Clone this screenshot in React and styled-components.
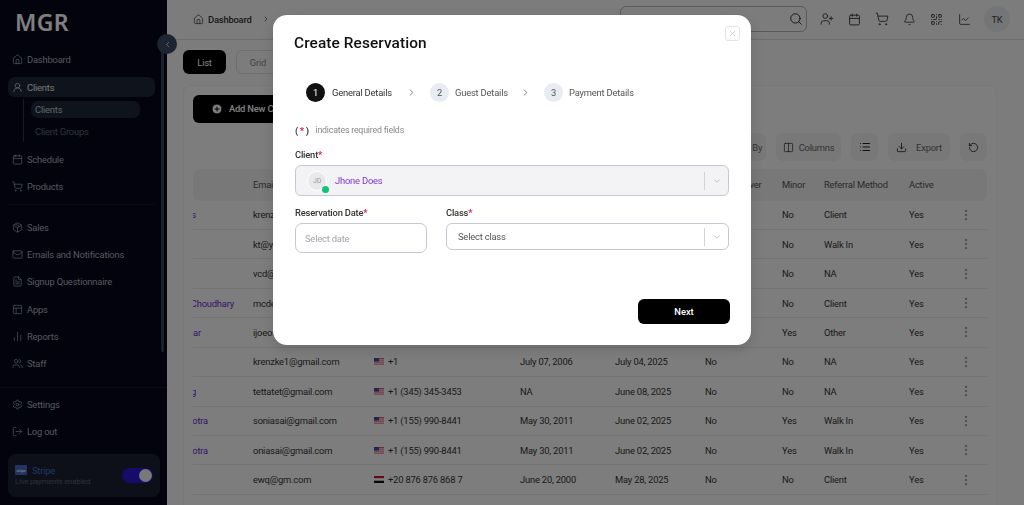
import React from "react";
import styled, { createGlobalStyle } from "styled-components";
import {
  Home, UserRound, Calendar, ShoppingCart, Package, Mail, FileText, PanelsTopLeft,
  ChartNoAxesColumn, Users, Settings, LogOut, Search, UserPlus, Bell, ChartLine,
  Columns2, List, Download, RotateCcw, EllipsisVertical, ChevronRight, ChevronDown,
  ChevronLeft, X, CirclePlus, QrCode, Filter,
} from "lucide-react";

const GlobalStyle = createGlobalStyle`
  html, body {
    margin: 0;
    height: 100%;
    overflow: hidden;
    font-family: Roboto, "Noto Sans", sans-serif;
    font-size: 9.4px;
    letter-spacing: -0.2px;
    background: #f9f9f9;
  }
  * { box-sizing: border-box; }
`;

const Page = styled.div`
  display: flex;
  width: 1024px;
  height: 505px;
  overflow: hidden;
`;

/* sidebar */
const Sidebar = styled.aside`
  position: relative;
  flex: 0 0 167px;
  display: flex;
  flex-direction: column;
  background: #05061a;
  color: #b6bcc8;
`;
const Logo = styled.div`
  height: 49px;
  padding: 7px 0 0 15px;
  font-family: "Noto Sans", sans-serif;
  font-size: 23px;
  line-height: 30px;
  font-weight: 600;
  letter-spacing: 0.3px;
  color: #fff;
`;
const Nav = styled.nav`
  flex: 1;
  display: flex;
  flex-direction: column;
  gap: 7.3px;
  padding: 0 12px 0 8px;
`;
const NavItem = styled.div`
  display: flex;
  align-items: center;
  gap: 4px;
  flex: none;
  height: 20px;
  margin-bottom: ${(p) => (p.$first ? "1px" : "0")};
  padding-left: 4px;
  border-radius: 7px;
  color: ${(p) => (p.$active ? "#e4e8f0" : "#aab0bd")};
  background: ${(p) => (p.$active ? "#1e2638" : "transparent")};
`;
const SubList = styled.div`
  display: flex;
  flex-direction: column;
  gap: 4.5px;
  flex: none;
  height: 43px;
  margin: -5.3px 0 0 15px;
  padding: 2px 0 0 7px;
  border-left: 1px solid #2c3446;
  width: 117px;
`;
const SubItem = styled.div`
  display: flex;
  align-items: center;
  height: 17px;
  padding-left: 4px;
  border-radius: 7px;
  color: ${(p) => (p.$active ? "#c4c9d4" : "#5f6675")};
  background: ${(p) => (p.$active ? "#1e2638" : "transparent")};
`;
const NavDivider = styled.div`
  flex: none;
  height: 1px;
  margin-bottom: 4.7px;
  background: #141828;
`;
const SideFooter = styled.div`
  display: flex;
  flex-direction: column;
  gap: 7px;
  padding: 6px 7px 8px 8px;
  border-top: 1px solid #141828;
`;
const StripeCard = styled.div`
  display: flex;
  align-items: center;
  justify-content: space-between;
  height: 43px;
  margin-top: 6px;
  padding: 0 7px;
  border-radius: 8px;
  background: #1b2130;
`;
const StripeName = styled.div`
  display: flex;
  align-items: center;
  gap: 5px;
  line-height: 11px;
  color: #3f6fc9;
`;
const StripeLogo = styled.span`
  display: flex;
  align-items: center;
  justify-content: center;
  width: 12px;
  height: 10px;
  border-radius: 1px;
  background: #4468c9;
  font-size: 4px;
  font-weight: 700;
  color: #dfe6fb;
`;
const StripeHint = styled.div`
  margin-top: 1px;
  font-size: 7.8px;
  line-height: 10px;
  color: #5b6271;
`;
const Toggle = styled.div`
  display: flex;
  align-items: center;
  justify-content: flex-end;
  width: 31px;
  height: 15px;
  padding-right: 1px;
  border-radius: 8px;
  background: #2c16d0;
`;
const Knob = styled.span`
  width: 13px;
  height: 13px;
  border-radius: 50%;
  background: #f3f3f3;
`;
const ScrollThumb = styled.div`
  position: absolute;
  top: 50px;
  left: 161px;
  width: 3px;
  height: 302px;
  border-radius: 2px;
  background: #34405a;
`;
const Collapse = styled.div`
  position: absolute;
  top: 34px;
  left: 157px;
  width: 20px;
  height: 20px;
  display: flex;
  align-items: center;
  justify-content: center;
  border-radius: 50%;
  background: #3a4a66;
  color: #d8dce4;
  z-index: 2;
`;

/* main column */
const Main = styled.main`
  flex: 1;
  display: flex;
  flex-direction: column;
  min-width: 0;
`;
const TopBar = styled.header`
  flex: 0 0 40px;
  display: flex;
  align-items: center;
  padding: 0 14px 1px 26px;
  border-bottom: 1px solid #d8d8d8;
`;
const Crumbs = styled.div`
  display: flex;
  align-items: center;
  gap: 4px;
  font-weight: 500;
  color: #333;
`;
const CrumbArrow = styled(ChevronRight)`
  margin: 0 6px;
`;
const SearchBox = styled.div`
  display: flex;
  align-items: center;
  justify-content: flex-end;
  width: 187px;
  height: 26px;
  margin-left: auto;
  padding-right: 3px;
  border: 1px solid #b4b4b4;
  border-radius: 6px;
  color: #333;
`;
const TopIcons = styled.div`
  display: flex;
  align-items: center;
  gap: 14.2px;
  margin-left: 13px;
  color: #333;
`;
const Avatar = styled.div`
  display: flex;
  align-items: center;
  justify-content: center;
  width: 26px;
  height: 26px;
  margin-left: -0.7px;
  border-radius: 50%;
  background: #e9ebef;
  color: #444;
`;
const Content = styled.div`
  flex: 1;
  display: flex;
  flex-direction: column;
  gap: 11px;
  padding: 10px 27px 0 16px;
  min-height: 0;
`;
const Tabs = styled.div`
  display: flex;
  gap: 10px;
`;
const Tab = styled.div`
  display: flex;
  align-items: center;
  justify-content: center;
  width: ${(p) => (p.$active ? 43 : 44)}px;
  height: 24px;
  border-radius: 6px;
  color: ${(p) => (p.$active ? "#fff" : "#888")};
  background: ${(p) => (p.$active ? "#000" : "transparent")};
  border: ${(p) => (p.$active ? "none" : "1px solid #ddd")};
`;
const Card = styled.section`
  flex: 1;
  padding: 9px 9px 0;
  border: 1px solid #f0f0f0;
  border-bottom: 0;
  border-radius: 8px 8px 0 0;
  overflow: hidden;
  background: #fbfbfb;
`;
const AddButton = styled.div`
  display: flex;
  align-items: center;
  gap: 6px;
  width: 150px;
  height: 28px;
  padding: 0 0 1px 18px;
  border-radius: 6px;
  background: #000;
  color: #fff;
  font-weight: 500;
`;
const ToolRow = styled.div`
  display: flex;
  justify-content: flex-end;
  gap: 10px;
  margin-top: 10px;
`;
const ToolButton = styled.div`
  display: flex;
  align-items: center;
  justify-content: center;
  gap: ${(p) => p.$gap || 5}px;
  width: ${(p) => p.$w}px;
  height: 28px;
  border-radius: 7px;
  background: #f0f0f1;
  color: #666;
  svg { color: #222; }
`;
const Row = styled.div`
  display: grid;
  grid-template-columns: 60px 121px 146px 95px 90px 77px 42px 85px 51px 27px;
  align-items: center;
  height: 29.45px;
  color: #333;
  border-bottom: 1px solid #e6e6e6;
`;
const HeadRow = styled(Row)`
  height: 31.5px;
  margin-top: 8px;
  border: 0;
  border-radius: 7px;
  background: #f0f0f1;
  color: #555;
`;
const NameCell = styled.div`
  display: flex;
  overflow: hidden;
`;
const NameClip = styled.div`
  display: flex;
  justify-content: flex-end;
  width: ${(p) => p.$visible}px;
  min-width: 0;
  flex: none;
  white-space: nowrap;
  color: #6d28d9;
`;
const NameText = styled.span`
  flex: none;
`;
const Phone = styled.div`
  display: flex;
  align-items: center;
  gap: 4px;
  white-space: nowrap;
`;
const Kebab = styled.div`
  display: flex;
  margin-left: -1px;
  color: #a0a0a0;
`;

/* overlay + modal */
const Backdrop = styled.div`
  position: fixed;
  inset: 0;
  display: flex;
  align-items: flex-start;
  justify-content: center;
  padding-top: 15px;
  background: rgba(0, 0, 0, 0.5);
  z-index: 5;
`;
const Modal = styled.div`
  position: relative;
  width: 478px;
  height: 330px;
  padding: 18px 22px 0 22px;
  border-radius: 14px;
  background: #fff;
  box-shadow: 0 4px 14px rgba(0, 0, 0, 0.15);
`;
const Title = styled.h2`
  margin: 0 0 0 -1px;
  font-size: 15.4px;
  line-height: 20px;
  font-weight: 500;
  letter-spacing: 0.1px;
  color: #111;
`;
const CloseButton = styled.div`
  position: absolute;
  top: 11px;
  right: 11px;
  width: 15px;
  height: 15px;
  display: flex;
  align-items: center;
  justify-content: center;
  border: 1px solid #e4e4e8;
  border-radius: 3px;
  color: #c8c8ce;
`;
const Stepper = styled.div`
  display: flex;
  align-items: center;
  margin: 30px 0 0 11px;
  height: 19px;
`;
const StepCircle = styled.div`
  display: flex;
  align-items: center;
  justify-content: center;
  width: 19px;
  height: 19px;
  margin-right: ${(p) => (p.$active ? 7 : 6)}px;
  border-radius: 50%;
  color: ${(p) => (p.$active ? "#fff" : "#555")};
  background: ${(p) => (p.$active ? "#111" : "#e8ebf2")};
`;
const StepLabel = styled.div`
  width: ${(p) => p.$w}px;
  white-space: nowrap;
  color: ${(p) => (p.$active ? "#333" : "#555")};
`;
const StepArrow = styled.div`
  display: flex;
  justify-content: center;
  width: 38px;
  color: #777;
`;
const Required = styled.div`
  display: flex;
  align-items: center;
  gap: 5px;
  margin: 22px 0 0;
  height: 12px;
  font-size: 8.8px;
  color: #888;
`;
const Paren = styled.span`
  font-size: 9.4px;
  font-weight: 700;
  letter-spacing: 1.5px;
  color: #444;
  b { color: #e11d48; }
`;
const Field = styled.div`
  display: flex;
  flex-direction: column;
  flex: ${(p) => (p.$w ? `0 0 ${p.$w}px` : 1)};
`;
const Label = styled.label`
  height: 12px;
  margin-bottom: 4px;
  line-height: 12px;
  font-weight: 500;
  color: #333;
  b { color: #e11d48; }
`;
const SelectBox = styled.div`
  display: flex;
  align-items: center;
  height: ${(p) => p.$h}px;
  border: 1px solid #c5c8d2;
  border-radius: 6px;
  background: ${(p) => (p.$disabled ? "#f3f3f6" : "#fff")};
`;
const SelectValue = styled.div`
  flex: 1;
  display: flex;
  align-items: center;
  gap: 8px;
  padding-left: ${(p) => p.$pad}px;
  color: ${(p) => p.$color || "#555"};
`;
const SelectArrow = styled.div`
  display: flex;
  align-items: center;
  justify-content: center;
  width: 24px;
  height: 18px;
  border-left: 1px solid #d0d2d9;
  color: #b4b6bd;
`;
const ClientAvatar = styled.div`
  position: relative;
  display: flex;
  align-items: center;
  justify-content: center;
  width: 20px;
  height: 20px;
  border: 1px solid #fff;
  border-radius: 50%;
  background: #e9e9ec;
  font-size: 7px;
  color: #999;
`;
const OnlineDot = styled.span`
  position: absolute;
  right: -3px;
  bottom: -3px;
  width: 7px;
  height: 7px;
  border-radius: 50%;
  background: #10c476;
`;
const FieldRow = styled.div`
  display: flex;
  gap: 19px;
  margin-top: ${(p) => p.$top}px;
  align-items: flex-start;
`;
const DateInput = styled.div`
  display: flex;
  align-items: center;
  height: 30px;
  padding-left: 9px;
  border: 1px solid #c5c8d2;
  border-radius: 7px;
  color: #a2a2a8;
`;
const ModalFooter = styled.div`
  position: absolute;
  right: 21px;
  bottom: 21px;
`;
const NextButton = styled.button`
  width: 92px;
  height: 25px;
  border: 0;
  border-radius: 6px;
  background: #000;
  color: #fff;
  font-family: inherit;
  font-size: 9.4px;
  font-weight: 500;
`;

const navTop = [
  [Package, "Sales"],
  [Mail, "Emails and Notifications"],
  [FileText, "Signup Questionnaire"],
  [PanelsTopLeft, "Apps"],
  [ChartNoAxesColumn, "Reports"],
  [Users, "Staff"],
];

const rows = [
  { name: "Chris Evans", vis: 3, email: "krenzke@gmail.com", flag: "us", phone: "+1 (555) 201-1188", dob: "July 07, 2006", date: "July 04, 2025", waiver: "No", minor: "No", ref: "Client" },
  { name: "", vis: 0, email: "kt@yahoo.com", flag: "us", phone: "+1 (555) 301-4400", dob: "NA", date: "June 30, 2025", waiver: "No", minor: "No", ref: "Walk In" },
  { name: "", vis: 0, email: "vcd@gmail.com", flag: "us", phone: "+1 (555) 410-3321", dob: "NA", date: "June 28, 2025", waiver: "No", minor: "No", ref: "NA" },
  { name: "Mc Choudhary", vis: 41, email: "mcdev@gmail.com", flag: "us", phone: "+1 (555) 880-1200", dob: "May 02, 2001", date: "June 20, 2025", waiver: "No", minor: "No", ref: "Client" },
  { name: "Joe Kumar", vis: 8, email: "ijoeou@gmail.com", flag: "us", phone: "+1 (555) 120-7781", dob: "May 12, 2012", date: "June 12, 2025", waiver: "No", minor: "Yes", ref: "Other" },
  { name: "", vis: 0, email: "krenzke1@gmail.com", flag: "us", phone: "+1", dob: "July 07, 2006", date: "July 04, 2025", waiver: "No", minor: "No", ref: "NA" },
  { name: "Tetta Tang", vis: 3, email: "tettatet@gmail.com", flag: "us", phone: "+1 (345) 345-3453", dob: "NA", date: "June 08, 2025", waiver: "No", minor: "No", ref: "NA" },
  { name: "Sonia Malhotra", vis: 15, email: "soniasai@gmail.com", flag: "us", phone: "+1 (155) 990-8441", dob: "May 30, 2011", date: "June 02, 2025", waiver: "No", minor: "Yes", ref: "Walk In" },
  { name: "Sonia Malhotra", vis: 15, email: "oniasai@gmail.com", flag: "us", phone: "+1 (155) 990-8441", dob: "May 30, 2011", date: "June 02, 2025", waiver: "No", minor: "Yes", ref: "Walk In" },
  { name: "", vis: 0, email: "ewq@gm.com", flag: "eg", phone: "+20 876 876 868 7", dob: "June 20, 2000", date: "May 28, 2025", waiver: "No", minor: "No", ref: "Client" },
];

function Flag({ code }) {
  if (code === "eg") {
    return (
      <svg width="10" height="7" viewBox="0 0 10 7">
        <rect width="10" height="2.4" fill="#c8102e" />
        <rect y="2.4" width="10" height="2.3" fill="#fff" />
        <rect y="4.7" width="10" height="2.3" fill="#111" />
      </svg>
    );
  }
  return (
    <svg width="10" height="7" viewBox="0 0 10 7">
      <rect width="10" height="7" fill="#e0566a" />
      <rect y="1.4" width="10" height="1" fill="#fff" />
      <rect y="3.4" width="10" height="1" fill="#fff" />
      <rect y="5.4" width="10" height="1" fill="#fff" />
      <rect width="5" height="3.6" fill="#3c4fa0" />
    </svg>
  );
}

function Icon({ as: Glyph, size = 11 }) {
  return <Glyph size={size} strokeWidth={1.5} />;
}

export default function App() {
  return (
    <Page>
      <GlobalStyle />
      <Sidebar>
        <Logo>MGR</Logo>
        <Nav>
          <NavItem $first><Icon as={Home} />Dashboard</NavItem>
          <NavItem $active><Icon as={UserRound} />Clients</NavItem>
          <SubList>
            <SubItem $active>Clients</SubItem>
            <SubItem>Client Groups</SubItem>
          </SubList>
          <NavItem><Icon as={Calendar} />Schedule</NavItem>
          <NavItem><Icon as={ShoppingCart} />Products</NavItem>
          <NavDivider />
          {navTop.map(([glyph, label]) => (
            <NavItem key={label}><Icon as={glyph} />{label}</NavItem>
          ))}
        </Nav>
        <SideFooter>
          <NavItem><Icon as={Settings} />Settings</NavItem>
          <NavItem><Icon as={LogOut} />Log out</NavItem>
          <StripeCard>
            <div>
              <StripeName><StripeLogo>stripe</StripeLogo>Stripe</StripeName>
              <StripeHint>Live payments enabled</StripeHint>
            </div>
            <Toggle><Knob /></Toggle>
          </StripeCard>
        </SideFooter>
        <ScrollThumb />
        <Collapse><ChevronLeft size={9} strokeWidth={2.4} /></Collapse>
      </Sidebar>

      <Main>
        <TopBar>
          <Crumbs>
            <Icon as={Home} />Dashboard
            <CrumbArrow size={8} />
            <Icon as={UserRound} />Clients
          </Crumbs>
          <SearchBox><Search size={14} strokeWidth={1.7} /></SearchBox>
          <TopIcons>
            <UserPlus size={14} strokeWidth={1.5} />
            <Calendar size={13} strokeWidth={1.7} />
            <ShoppingCart size={14} strokeWidth={1.5} />
            <Bell size={13} strokeWidth={1.5} />
            <QrCode size={13} strokeWidth={1.7} />
            <ChartLine size={13} strokeWidth={1.5} />
            <Avatar>TK</Avatar>
          </TopIcons>
        </TopBar>
        <Content>
          <Tabs>
            <Tab $active>List</Tab>
            <Tab>Grid</Tab>
          </Tabs>
          <Card>
            <AddButton><CirclePlus size={12} fill="#fff" color="#000" />Add New Client</AddButton>
            <ToolRow>
              <ToolButton $w={60}><Filter size={11} />Group By</ToolButton>
              <ToolButton $w={65}><Columns2 size={11} strokeWidth={1.5} />Columns</ToolButton>
              <ToolButton $w={27}><List size={12} strokeWidth={2} /></ToolButton>
              <ToolButton $w={62} $gap={9}><Download size={11} strokeWidth={1.8} />Export</ToolButton>
              <ToolButton $w={27}><RotateCcw size={11} strokeWidth={1.8} /></ToolButton>
            </ToolRow>
            <HeadRow>
              <div />
              <div>Email</div>
              <div>Phone</div>
              <div>Date of Birth</div>
              <div>Joined</div>
              <div>Signed Waiver</div>
              <div>Minor</div>
              <div>Referral Method</div>
              <div>Active</div>
              <div />
            </HeadRow>
            {rows.map((r) => (
              <Row key={r.email}>
                <NameCell><NameClip $visible={r.vis}><NameText>{r.name}</NameText></NameClip></NameCell>
                <div>{r.email}</div>
                <Phone><Flag code={r.flag} />{r.phone}</Phone>
                <div>{r.dob}</div>
                <div>{r.date}</div>
                <div>{r.waiver}</div>
                <div>{r.minor}</div>
                <div>{r.ref}</div>
                <div>Yes</div>
                <Kebab><EllipsisVertical size={14} strokeWidth={2} /></Kebab>
              </Row>
            ))}
          </Card>
        </Content>
      </Main>

      <Backdrop>
        <Modal>
          <Title>Create Reservation</Title>
          <CloseButton><X size={9} /></CloseButton>
          <Stepper>
            <StepCircle $active>1</StepCircle>
            <StepLabel $active $w={60}>General Details</StepLabel>
            <StepArrow><ChevronRight size={11} /></StepArrow>
            <StepCircle>2</StepCircle>
            <StepLabel $w={51}>Guest Details</StepLabel>
            <StepArrow><ChevronRight size={11} /></StepArrow>
            <StepCircle>3</StepCircle>
            <StepLabel $w={64}>Payment Details</StepLabel>
          </Stepper>
          <Required><Paren>(<b>*</b>)</Paren>indicates required fields</Required>
          <FieldRow $top={13}>
            <Field>
              <Label>Client<b>*</b></Label>
              <SelectBox $h={31} $disabled>
                <SelectValue $pad={11} $color="#7c35d6">
                  <ClientAvatar>JD<OnlineDot /></ClientAvatar>
                  Jhone Does
                </SelectValue>
                <SelectArrow><ChevronDown size={10} /></SelectArrow>
              </SelectBox>
            </Field>
          </FieldRow>
          <FieldRow $top={11}>
            <Field $w={132}>
              <Label>Reservation Date<b>*</b></Label>
              <DateInput>Select date</DateInput>
            </Field>
            <Field>
              <Label>Class<b>*</b></Label>
              <SelectBox $h={27}>
                <SelectValue $pad={11}>Select class</SelectValue>
                <SelectArrow><ChevronDown size={10} /></SelectArrow>
              </SelectBox>
            </Field>
          </FieldRow>
          <ModalFooter><NextButton>Next</NextButton></ModalFooter>
        </Modal>
      </Backdrop>
    </Page>
  );
}
